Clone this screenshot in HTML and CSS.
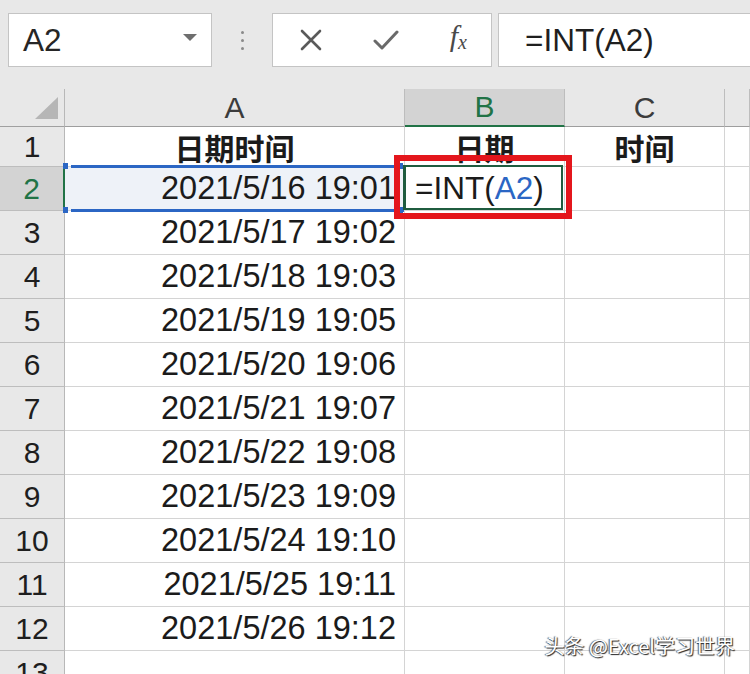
FILE: index.html
```html
<!DOCTYPE html>
<html lang="zh-CN">
<head>
    <meta charset="UTF-8">
    <meta name="viewport" content="width=device-width, initial-scale=1.0">
    <title>INT 取日期</title>
    <link rel="stylesheet" href="styles.css">
</head>
<body>
    <div class="toolbar">
        <div class="name-box">
            <span>A2</span>
            <svg class="caret" width="14" height="8" viewBox="0 0 14 8"><path d="M0 0H14L7 7Z" fill="#6e6e6e"/></svg>
        </div>
        <div class="grip"><i></i><i></i><i></i></div>
        <div class="fx-buttons">
            <svg width="24" height="24" viewBox="0 0 24 24"><path d="M3 3L21 21M21 3L3 21" stroke="#5a5a5a" stroke-width="2.6" stroke-linecap="round" fill="none"/></svg>
            <svg width="26" height="24" viewBox="0 0 26 24"><path d="M2 13L9 20L24 4" stroke="#6a6a6a" stroke-width="3" stroke-linecap="round" stroke-linejoin="round" fill="none"/></svg>
            <span class="fx">f<sub>x</sub></span>
        </div>
        <div class="formula">=INT(A2)</div>
    </div>

    <div class="sheet">
        <div class="corner"><span class="tri"></span></div>
        <div class="col-head">A</div>
        <div class="col-head active">B</div>
        <div class="col-head">C</div>
        <div class="col-head"></div>

        <div class="row-head">1</div>
        <div class="cell title">日期时间</div>
        <div class="cell title">日期</div>
        <div class="cell title">时间</div>
        <div class="cell"></div>

        <div class="row-head active">2</div>
        <div class="cell num ref">2021/5/16 19:01</div>
        <div class="cell editing"><span>=INT(<em>A2</em>)</span></div>
        <div class="cell"></div>
        <div class="cell"></div>

        <div class="row-head">3</div>
        <div class="cell num">2021/5/17 19:02</div>
        <div class="cell"></div><div class="cell"></div><div class="cell"></div>

        <div class="row-head">4</div>
        <div class="cell num">2021/5/18 19:03</div>
        <div class="cell"></div><div class="cell"></div><div class="cell"></div>

        <div class="row-head">5</div>
        <div class="cell num">2021/5/19 19:05</div>
        <div class="cell"></div><div class="cell"></div><div class="cell"></div>

        <div class="row-head">6</div>
        <div class="cell num">2021/5/20 19:06</div>
        <div class="cell"></div><div class="cell"></div><div class="cell"></div>

        <div class="row-head">7</div>
        <div class="cell num">2021/5/21 19:07</div>
        <div class="cell"></div><div class="cell"></div><div class="cell"></div>

        <div class="row-head">8</div>
        <div class="cell num">2021/5/22 19:08</div>
        <div class="cell"></div><div class="cell"></div><div class="cell"></div>

        <div class="row-head">9</div>
        <div class="cell num">2021/5/23 19:09</div>
        <div class="cell"></div><div class="cell"></div><div class="cell"></div>

        <div class="row-head">10</div>
        <div class="cell num">2021/5/24 19:10</div>
        <div class="cell"></div><div class="cell"></div><div class="cell"></div>

        <div class="row-head">11</div>
        <div class="cell num">2021/5/25 19:11</div>
        <div class="cell"></div><div class="cell"></div><div class="cell"></div>

        <div class="row-head">12</div>
        <div class="cell num">2021/5/26 19:12</div>
        <div class="cell"></div><div class="cell"></div><div class="cell"></div>

        <div class="row-head">13</div>
        <div class="cell"></div><div class="cell"></div><div class="cell"></div><div class="cell"></div>
    </div>

    <div class="watermark">头条 @Excel学习世界</div>
</body>
</html>
```

FILE: styles.css
```css
body {
    margin: 0;
    height: 674px;
    overflow: hidden;
    background-color: #e8e8e8;
    font-family: "Liberation Sans", "Noto Sans CJK SC", sans-serif;
    color: #1b1b1b;
    position: relative;
}

/* 上方名稱框 + 公式列 */
.toolbar {
    height: 89px;
    box-sizing: border-box;
    padding: 13px 0 0 8px;
    display: flex;
    align-items: flex-start;
}
.name-box {
    width: 204px;
    height: 54px;
    box-sizing: border-box;
    background-color: #fff;
    border: 1px solid #c4c4c4;
    display: flex;
    align-items: center;
    justify-content: space-between;
    padding: 0 14px 0 14px;
    font-size: 31.5px;
    color: #262626;
}
.name-box .caret {
    margin-top: -4px;
}
.grip {
    width: 60px;
    height: 54px;
    display: flex;
    flex-direction: column;
    align-items: center;
    justify-content: center;
    gap: 5px;
}
.grip i {
    width: 3px;
    height: 3px;
    border-radius: 50%;
    background-color: #8a8a8a;
}
.fx-buttons {
    width: 220px;
    height: 54px;
    box-sizing: border-box;
    background-color: #fff;
    border: 1px solid #c4c4c4;
    display: flex;
    align-items: center;
    justify-content: space-between;
    padding: 0 24px 0 26px;
}
.fx {
    font-family: "Liberation Serif", serif;
    font-style: italic;
    font-size: 30px;
    color: #4a4a4a;
    margin-top: -8px;
}
.fx sub {
    font-size: 20px;
    vertical-align: -3px;
}
.formula {
    flex: 1;
    height: 54px;
    margin-left: 6px;
    margin-right: -4px;
    box-sizing: border-box;
    background-color: #fff;
    border: 1px solid #c4c4c4;
    padding-left: 26px;
    font-size: 31.5px;
    line-height: 52px;
    color: #1f1f1f;
}

/* 工作表 */
.sheet {
    display: grid;
    grid-template-columns: 65px 340px 160px 160px 1fr;
    grid-template-rows: 38px 40px repeat(12, 44px);
    background-color: #fff;
}
.sheet > div {
    box-sizing: border-box;
    border-right: 1px solid #d4d4d4;
    border-bottom: 1px solid #d4d4d4;
    display: flex;
    align-items: center;
    font-size: 32px;
}
.corner {
    background-color: #e8e8e8;
    border-right-color: #b8b8b8 !important;
    border-bottom-color: #a0a0a0 !important;
    position: relative;
}
.corner .tri {
    position: absolute;
    right: 6px;
    bottom: 7px;
    width: 0;
    height: 0;
    border-left: 23px solid transparent;
    border-bottom: 22px solid #b6b6b6;
}
.col-head {
    background-color: #e8e8e8;
    justify-content: center;
    color: #3c3c3c;
    border-right-color: #bdbdbd !important;
    border-bottom-color: #9e9e9e !important;
    font-size: 30px !important;
}
.col-head.active {
    background-color: #d3d3d3;
    color: #217346;
    border-bottom: 2px solid #217346 !important;
}
.row-head {
    background-color: #e8e8e8;
    justify-content: center;
    color: #1e1e1e;
    border-right-color: #b8b8b8 !important;
    border-bottom-color: #bdbdbd !important;
    font-size: 30px !important;
}
.row-head.active {
    background-color: #d3d3d3;
    color: #217346;
    border-right: 2px solid #217346 !important;
}
.cell.title {
    justify-content: center;
    font-family: "Noto Sans CJK SC", sans-serif;
    font-weight: bold;
    font-size: 30px;
}
.cell.num {
    justify-content: flex-end;
    padding-right: 8px;
    font-size: 32.5px;
}

/* A2 參照框 */
.cell.ref {
    position: relative;
    background-color: #eef2f8;
}
.cell.ref::before {
    content: "";
    position: absolute;
    left: 6px;
    right: 0;
    top: -2px;
    bottom: -2px;
    border-top: 3px solid #2b66c4;
    border-bottom: 3px solid #2b66c4;
}
.cell.ref::after {
    content: "";
    position: absolute;
    left: -2px;
    top: -4px;
    width: 5px;
    height: 6px;
    background-color: #2b66c4;
    box-shadow: 0 44px 0 #2b66c4, 335px 0 0 #2b66c4, 335px 44px 0 #2b66c4;
}

/* B2 編輯中 + 紅框 */
.cell.editing {
    position: relative;
    padding-left: 10px;
    font-size: 31.5px;
}
.cell.editing em {
    font-style: normal;
    color: #2b66c4;
}
.cell.editing::before {
    content: "";
    position: absolute;
    left: -2px;
    top: -2px;
    right: 1px;
    bottom: 0;
    border: 2px solid #1f5c3f;
    border-left-width: 3px;
}
.cell.editing::after {
    content: "";
    position: absolute;
    left: -11px;
    top: -12px;
    right: -8px;
    bottom: -9px;
    border: 6px solid #e4161c;
}

.watermark {
    position: absolute;
    right: 15px;
    bottom: 14px;
    font-family: "Noto Sans CJK SC", sans-serif;
    font-size: 20px;
    color: #fff;
    text-shadow: 1px 1px 1px #222, -1px 0 1px #555;
}
```
